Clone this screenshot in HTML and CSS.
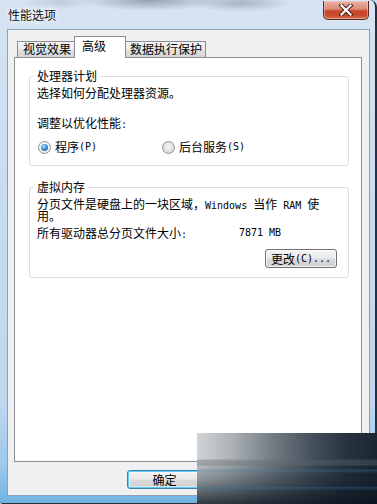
FILE: index.html
```html
<!DOCTYPE html>
<html lang="zh-CN">
<head>
<meta charset="utf-8">
<title>性能选项</title>
<link rel="stylesheet" href="styles.css">
</head>
<body>
<div class="window">
  <div class="titlebar">
    <span class="title">性能选项</span>
    <div class="close">
      <svg width="16" height="12" viewBox="0 0 16 12">
        <path d="M3.5 1.5 L12.5 10.5 M12.5 1.5 L3.5 10.5" stroke="#4a2018" stroke-width="4.2" stroke-linecap="square" fill="none"/>
        <path d="M3.5 1.5 L12.5 10.5 M12.5 1.5 L3.5 10.5" stroke="#ffffff" stroke-width="2.2" stroke-linecap="square" fill="none"/>
      </svg>
    </div>
  </div>
  <div class="client">
    <div class="tabs">
      <div class="tab tab-1">视觉效果</div>
      <div class="tab tab-active">高级</div>
      <div class="tab tab-3">数据执行保护</div>
    </div>
    <div class="panel">
      <fieldset class="group group-cpu">
        <legend>处理器计划</legend>
        <p class="line first">选择如何分配处理器资源。</p>
        <p class="line adjust">调整以优化性能<span class="lat">:</span></p>
        <div class="radios">
          <label class="radio radio-prog"><span class="dot on"><span class="inner"></span></span>程序<span class="lat">(P)</span></label>
          <label class="radio"><span class="dot"></span>后台服务<span class="lat">(S)</span></label>
        </div>
      </fieldset>
      <fieldset class="group group-mem">
        <legend>虚拟内存</legend>
        <p class="para"><span class="pl">分页文件是硬盘上的一块区域，<span class="lat">Windows </span>当作<span class="lat"> RAM </span>使</span><span class="pl">用。</span></p>
        <div class="size-row">
          <span>所有驱动器总分页文件大小<span class="lat">:</span></span>
          <span class="lat">7871 MB</span>
        </div>
        <div class="btn-row">
          <button class="btn change">更改<span class="lat">(C)...</span></button>
        </div>
      </fieldset>
    </div>
    <div class="footer">
      <button class="btn default">确定</button>
    </div>
  </div>
</div>
<div class="overlay"></div>
</body>
</html>
```
FILE: styles.css
```css
* { box-sizing: border-box; }
html, body { margin: 0; padding: 0; }
body {
  width: 377px;
  height: 504px;
  overflow: hidden;
  position: relative;
  font-family: "Noto Sans CJK SC", "Noto Sans CJK JP", sans-serif;
  font-size: 12px;
  color: #000;
  background: #c8dbef;
}
.lat {
  font-family: "DejaVu Sans Mono", "Liberation Mono", monospace;
  font-size: 10px;
  white-space: pre;
}
.window {
  width: 377px;
  height: 504px;
  display: flex;
  flex-direction: column;
  border-right: 2px solid #25323e;
  border-bottom: 1px solid #25323e;
  border-top-right-radius: 7px;
  border-bottom-left-radius: 3px;
  background:
    radial-gradient(ellipse 70px 11px at 150px 0px, rgba(95,105,118,0.55), rgba(95,105,118,0) 100%),
    radial-gradient(ellipse 50px 9px at 240px 3px, rgba(110,118,130,0.45), rgba(110,118,130,0) 100%),
    radial-gradient(ellipse 40px 8px at 60px 2px, rgba(150,160,172,0.35), rgba(150,160,172,0) 100%),
    linear-gradient(to bottom, #d6e4f3 0%, #c8dcf0 40%, #bfd6ee 80%, #9cc8ec 93%, #6fb2e2 100%);
}
.titlebar {
  height: 29px;
  display: flex;
  align-items: flex-start;
  padding-left: 8px;
}
.title {
  padding-top: 8px;
  line-height: 14px;
  color: #111;
  text-shadow: 0 0 4px #fff, 0 0 6px #fff;
}
.close {
  margin-left: auto;
  margin-right: 6px;
  margin-top: 1px;
  width: 46px;
  height: 19px;
  border: 1px solid #5a2a22;
  border-top: none;
  border-radius: 0 0 5px 5px;
  background: linear-gradient(to bottom, #eab3a6 0%, #dd8a76 45%, #c8462b 55%, #c84a2c 80%, #d87452 100%);
  box-shadow: inset 0 0 0 1px rgba(255,220,210,0.45);
  display: flex;
  align-items: center;
  justify-content: center;
}
.client {
  flex: 1;
  margin: 0 5px 7px 7px;
  border: 1px solid #8d9fb2;
  background: #f0f0f0;
  display: flex;
  flex-direction: column;
}
.tabs {
  margin-top: 6px;
  padding-left: 9px;
  height: 21px;
  display: flex;
  align-items: flex-end;
}
.tab {
  height: 16px;
  border: 1px solid #898c95;
  border-bottom: none;
  line-height: 14px;
  padding-left: 5px;
  background: linear-gradient(to bottom, #f5f5f5 0%, #ebebeb 50%, #dedede 55%, #d8d8d8 100%);
  white-space: nowrap;
}
.tab-1 { width: 57px; border-right: none; }
.tab-3 { width: 80px; border-left: none; padding-left: 4px; }
.tab-active {
  width: 52px;
  height: 22px;
  margin-bottom: -1px;
  padding-top: 2px;
  padding-left: 7px;
  background: #fff;
  position: relative;
  z-index: 1;
}
.panel {
  height: 405px;
  margin: 0 7px 0 6px;
  border: 1px solid #898c95;
  background: #fff;
  padding: 0 12px 0 14px;
}
.group {
  margin: 0;
  border: 1px solid #d5dfe5;
  border-radius: 3px;
  padding: 0 11px 0 7px;
  min-inline-size: 0;
}
.group legend {
  margin-left: -4px;
  padding: 0 3px 0 4px;
  line-height: 14px;
}
.group-cpu { margin-top: 11px; padding-top: 3px; padding-bottom: 11px; }
.group-mem { margin-top: 14px; padding-top: 4px; padding-bottom: 9px; }
.line { margin: 0; line-height: 14px; }
.adjust { margin-top: 16px; }
.radios {
  margin-top: 8px;
  display: flex;
  height: 14px;
  align-items: center;
}
.radio {
  display: flex;
  align-items: center;
  line-height: 14px;
  white-space: nowrap;
}
.radio-prog { width: 125px; padding-left: 1px; }
.dot {
  width: 13px;
  height: 13px;
  border-radius: 50%;
  border: 1px solid #8f9396;
  background: radial-gradient(circle at 50% 45%, #f6f6f6 0%, #e3e3e3 50%, #cfcfcf 100%);
  margin-right: 4px;
  display: flex;
  align-items: center;
  justify-content: center;
  flex: none;
}
.dot.on { background: radial-gradient(circle at 50% 45%, #ffffff 0%, #eef3f7 60%, #d7dde2 100%); }
.dot .inner {
  width: 7px;
  height: 7px;
  border-radius: 50%;
  background: radial-gradient(circle at 40% 35%, #b9e2fb 0%, #3f8fd6 45%, #134d8f 100%);
}
.para {
  margin: 0;
  display: flex;
  flex-direction: column;
}
.pl {
  display: block;
  height: 12px;
  line-height: 12px;
  white-space: nowrap;
}
.size-row {
  margin-top: 4px;
  line-height: 14px;
  display: grid;
  grid-template-columns: 202px auto;
}
.btn-row {
  margin-top: 7px;
  display: flex;
  justify-content: flex-end;
}
.btn {
  font-family: inherit;
  font-size: 12px;
  color: #000;
  height: 19px;
  padding: 0;
  line-height: 16px;
  border: 1px solid #707070;
  border-radius: 3px;
  background: linear-gradient(to bottom, #f3f3f3 0%, #ebebeb 48%, #dcdcdc 52%, #cfcfcf 100%);
  box-shadow: inset 0 0 0 1px rgba(255,255,255,0.7);
  display: flex;
  align-items: center;
  justify-content: center;
}
.change { width: 72px; }
.footer {
  margin-top: 8px;
  padding-left: 119px;
  display: flex;
}
.default {
  width: 75px;
  border-color: #3c7fb1;
  box-shadow: inset 0 0 0 1px #5fd0f8, inset 0 0 0 2px rgba(255,255,255,0.4);
}
.overlay {
  position: absolute;
  left: 197px;
  top: 433px;
  width: 180px;
  height: 71px;
  background:
    linear-gradient(to bottom, rgba(0,0,0,0) 0%, rgba(0,0,0,0) 37%, rgba(100,106,112,0.35) 38%, rgba(100,106,112,0.35) 45%, rgba(0,0,0,0) 47%, rgba(0,0,0,0) 51%, rgba(60,130,170,0.35) 52%, rgba(60,130,170,0) 57%, rgba(0,0,0,0) 75%, rgba(50,120,160,0.35) 77%, rgba(0,0,0,0) 81%),
    linear-gradient(to bottom, rgba(0,0,0,0) 0%, rgba(0,0,0,0) 35%, rgba(10,22,34,0.4) 70%, rgba(8,18,28,0.8) 100%),
    linear-gradient(to right, #d2d5d7 0%, #aab0b4 20%, #737c84 42%, #44505b 64%, #283541 82%, #1a2631 100%);
}
```
